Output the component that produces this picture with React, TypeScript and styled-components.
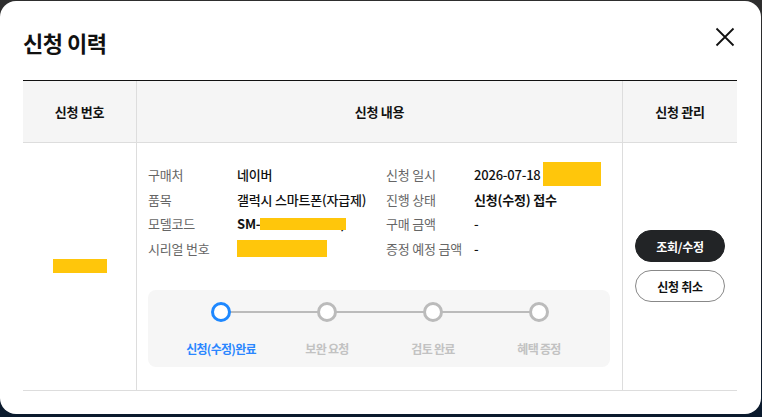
import React from 'react';
import styled, { createGlobalStyle } from 'styled-components';

const GlobalStyle = createGlobalStyle`
  html, body {
    margin: 0;
    padding: 0;
  }
  body {
    width: 762px;
    height: 417px;
    overflow: hidden;
    background: linear-gradient(to bottom, #2e2e2e 0%, #1a1f27 60%, #0a1a2d 100%);
    font-family: 'Noto Sans CJK KR', 'Noto Sans', sans-serif;
    color: #111;
  }
  * { box-sizing: border-box; }
`;

const Modal = styled.div`
  margin-top: 1px;
  width: 761px;
  height: 413px;
  background: #fff;
  border-radius: 16px;
  padding: 0 24px 0 23px;
`;

const Header = styled.div`
  display: flex;
  justify-content: space-between;
  align-items: flex-start;
  padding-top: 24px;
  margin-bottom: 21px;
`;

const Title = styled.h2`
  margin: 0;
  font-size: 22px;
  line-height: 34px;
  font-weight: 700;
  letter-spacing: -0.5px;
`;

const CloseButton = styled.button`
  border: 0;
  background: none;
  padding: 0;
  width: 24px;
  height: 24px;
  display: flex;
  cursor: pointer;
`;

const Table = styled.div`
  display: grid;
  grid-template-columns: 114px 486px 1fr;
  border-top: 1px solid #111;
`;

const HeadCell = styled.div<{ $last?: boolean }>`
  height: 62px;
  display: flex;
  align-items: center;
  justify-content: center;
  background: #f5f5f5;
  border-bottom: 1px solid #ddd;
  border-right: ${(p) => (p.$last ? '0' : '1px solid #ddd')};
  font-size: 13px;
  font-weight: 700;
  letter-spacing: -0.3px;
`;

const BodyCell = styled.div<{ $last?: boolean }>`
  display: flex;
  flex-direction: column;
  align-items: center;
  justify-content: center;
  gap: 8px;
  border-bottom: 1px solid #ddd;
  border-right: ${(p) => (p.$last ? '0' : '1px solid #ddd')};
`;

const ContentCell = styled.div`
  padding: 19px 12px 23px 11px;
  border-bottom: 1px solid #ddd;
  border-right: 1px solid #ddd;
`;

const InfoGrid = styled.dl`
  margin: 0;
  display: grid;
  grid-template-columns: 89px 149px 88px 1fr;
  grid-auto-rows: 24.7px;
  align-items: center;
  font-size: 13px;
  letter-spacing: -0.2px;
`;

const Label = styled.dt`
  color: #666;
  white-space: nowrap;
`;

const Value = styled.dd<{ $bold?: boolean }>`
  margin: 0;
  display: flex;
  align-items: center;
  font-weight: ${(p) => (p.$bold ? 700 : 500)};
  color: #111;
  white-space: nowrap;
`;

const Redacted = styled.span<{ $w: number; $h: number }>`
  position: relative;
  z-index: 1;
  display: inline-block;
  flex-shrink: 0;
  width: ${(p) => p.$w}px;
  height: ${(p) => p.$h}px;
  background: #ffc60b;
`;

const Peek = styled.span`
  margin-left: -6px;
`;

const Stepper = styled.ol`
  list-style: none;
  margin: 29px 0 0 0;
  padding: 12px 18px 10px 20px;
  background: #f6f6f6;
  border-radius: 8px;
  display: grid;
  grid-template-columns: repeat(4, 1fr);
`;

const Step = styled.li<{ $last?: boolean }>`
  position: relative;
  display: flex;
  flex-direction: column;
  align-items: center;
  gap: 18px;

  &::before {
    content: '';
    display: ${(p) => (p.$last ? 'none' : 'block')};
    position: absolute;
    top: 9px;
    left: 50%;
    width: 100%;
    height: 2px;
    background: #bbb;
  }
`;

const Dot = styled.span<{ $active?: boolean }>`
  position: relative;
  z-index: 1;
  width: 20px;
  height: 20px;
  border-radius: 50%;
  background: #fff;
  border: 3px solid ${(p) => (p.$active ? '#1e88ff' : '#bbb')};
`;

const StepLabel = styled.span<{ $active?: boolean }>`
  font-size: 12px;
  line-height: 17px;
  font-weight: 700;
  letter-spacing: -0.7px;
  color: ${(p) => (p.$active ? '#2a86ff' : '#c2c2c2')};
`;

const PillButton = styled.button<{ $primary?: boolean }>`
  width: 90px;
  height: 32px;
  border-radius: 16px;
  font-family: inherit;
  font-size: 12px;
  font-weight: 700;
  letter-spacing: -0.3px;
  cursor: pointer;
  background: ${(p) => (p.$primary ? '#222426' : '#fff')};
  color: ${(p) => (p.$primary ? '#fff' : '#111')};
  border: 1px solid ${(p) => (p.$primary ? '#222426' : '#888')};
`;

const steps = ['신청(수정)완료', '보완 요청', '검토 완료', '혜택 증정'];

export default function App() {
  return (
    <>
      <GlobalStyle />
      <Modal>
        <Header>
          <Title>신청 이력</Title>
          <CloseButton aria-label="닫기">
            <svg width="24" height="24" viewBox="0 0 24 24" fill="none">
              <path d="M3.5 3.5 L20.5 20.5 M20.5 3.5 L3.5 20.5" stroke="#111" strokeWidth="1.8" />
            </svg>
          </CloseButton>
        </Header>
        <Table>
          <HeadCell>신청 번호</HeadCell>
          <HeadCell>신청 내용</HeadCell>
          <HeadCell $last>신청 관리</HeadCell>

          <BodyCell>
            <Redacted $w={54} $h={14} />
          </BodyCell>
          <ContentCell>
            <InfoGrid>
              <Label>구매처</Label>
              <Value>네이버</Value>
              <Label>신청 일시</Label>
              <Value>
                2026-07-18&nbsp;
                <Redacted $w={58} $h={24} />
              </Value>

              <Label>품목</Label>
              <Value>갤럭시 스마트폰(자급제)</Value>
              <Label>진행 상태</Label>
              <Value $bold>신청(수정) 접수</Value>

              <Label>모델코드</Label>
              <Value $bold>
                SM-
                <Redacted $w={86} $h={12} />
                <Peek>)</Peek>
              </Value>
              <Label>구매 금액</Label>
              <Value>-</Value>

              <Label>시리얼 번호</Label>
              <Value>
                <Redacted $w={90} $h={17} />
              </Value>
              <Label>증정 예정 금액</Label>
              <Value>-</Value>
            </InfoGrid>
            <Stepper>
              {steps.map((s, i) => (
                <Step key={s} $last={i === steps.length - 1}>
                  <Dot $active={i === 0} />
                  <StepLabel $active={i === 0}>{s}</StepLabel>
                </Step>
              ))}
            </Stepper>
          </ContentCell>
          <BodyCell $last>
            <PillButton $primary>조회/수정</PillButton>
            <PillButton>신청 취소</PillButton>
          </BodyCell>
        </Table>
      </Modal>
    </>
  );
}
